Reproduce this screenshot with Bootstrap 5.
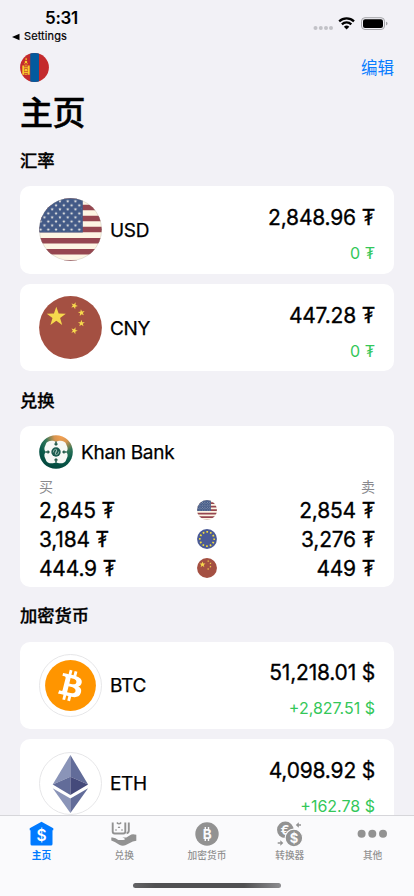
<!DOCTYPE html>
<html lang="zh-CN">
<head>
<meta charset="utf-8">
<meta name="viewport" content="width=device-width, initial-scale=1">
<title>主页</title>
<link href="https://cdn.jsdelivr.net/npm/bootstrap@5.3.0/dist/css/bootstrap.min.css" rel="stylesheet">
<style>
body{background:#f2f1f6;color:#000;font-family:Inter,"Noto Sans CJK SC",sans-serif;line-height:1;overflow:hidden}
.screen{width:414px;height:896px}
.status{height:44px}
.clock{font-size:17px;font-weight:600;margin:10px 0 0 45px;letter-spacing:-.3px}
.backlink{font-size:11px;font-weight:400;margin:4px 0 0 12px;height:11px;letter-spacing:.1px;-webkit-text-stroke:.2px #000}
.signals{padding:15px 26px 0 0}
.topnav{height:46px}
.edit{color:#087cff;font-size:16.5px;padding-top:2px}
.page-title{font-size:33px;font-weight:500;height:43px;letter-spacing:-.5px;padding-top:4px;-webkit-text-stroke:.5px #000}
.sect{font-size:17.3px;font-weight:500;height:54.6px;margin:0;padding-top:5px;-webkit-text-stroke:.3px #000}
.sect-first{height:53px;padding-top:4px}
.tile{border:0;border-radius:10px}
.rate{height:87.7px;margin-bottom:10px;padding:0 19px}
.code{font-size:19px;font-weight:400;margin-left:8px;padding-top:1px;letter-spacing:-.3px;-webkit-text-stroke:.25px #000}
.amount{font-size:21px;font-weight:400;white-space:nowrap;letter-spacing:-.2px;-webkit-text-stroke:.3px #000}
.delta{font-size:16px;color:#34c759;white-space:nowrap}
.figures{height:62px;padding-top:8px}
.bank{height:161px;padding:9px 19px 0}
.cap{font-size:14px;color:#8a8a8e;height:18px;padding-bottom:2px}
.quote{height:29px}
.quote span{padding-top:1px}
.bank .quotes{padding-top:1px}
.tabs{height:81px;background:#fafafc;border-top:1px solid #d6d6da;color:#929292}
.tabs svg{height:26px;width:34px}
.tabs a{color:inherit;font-size:9.7px;font-weight:500;padding-top:5px}
.tabs a.active{color:#007aff;font-weight:700}
.home-bar{width:148px;height:5px;border-radius:3px;background:linear-gradient(90deg,#646466,#505052 15%,#505052 75%,#8d8d90);bottom:8px;left:133px}
svg text{font-family:Inter,sans-serif}
</style>
<script src="https://cdn.jsdelivr.net/npm/bootstrap@5.3.0/dist/js/bootstrap.bundle.min.js"></script>
</head>
<body>
<svg width="0" height="0" class="position-absolute" aria-hidden="true">
<defs>
<clipPath id="round"><circle cx="31.5" cy="31.5" r="31.3"/></clipPath>
<path id="star" d="M0-1 .235-.324.951-.309.38.124.588.809 0 .4-.588.809-.38.124-.951-.309-.235-.324Z"/>
<pattern id="stars" x="-2.3" y="1.3" width="7.75" height="8.06" patternUnits="userSpaceOnUse"><g fill="#f4f1ea">
<use href="#star" transform="translate(0 2) scale(1.7)"/><use href="#star" transform="translate(7.75 2) scale(1.7)"/><use href="#star" transform="translate(3.87 6.03) scale(1.7)"/></g>
</pattern>
<radialGradient id="kh" cx=".66" cy=".04" r=".95"><stop offset="0" stop-color="#f3a052"/><stop offset=".22" stop-color="#d7944f"/><stop offset=".5" stop-color="#2f7558"/><stop offset=".75" stop-color="#0a5a4a"/><stop offset="1" stop-color="#04493f"/></radialGradient>
<symbol id="us" viewBox="0 0 63 63"><g clip-path="url(#round)"><path fill="#fdf5e3" d="M0 0h63v63H0z"/><path stroke="#964650" stroke-width="5.5" d="M0-1.6h63M0 9.5h63M0 20.5h63M0 31.6h63M0 42.7h63M0 53.8h63M0 64.8h63"/><path fill="#435a87" d="M0 0h43.8v34.4H0z"/><path fill="url(#stars)" d="M0 1h43v33H0z"/></g><circle cx="31.5" cy="31.5" r="31.1" fill="none" stroke="#888" stroke-opacity=".35" stroke-width=".6"/></symbol>
<symbol id="cn" viewBox="0 0 63 63"><circle cx="31.5" cy="31.5" r="31.4" fill="#a45042"/><g fill="#f6d94d"><use href="#star" transform="translate(17.3 20.8) scale(10)"/><use href="#star" transform="translate(35.3 9.7) rotate(22) scale(3.6)"/><use href="#star" transform="translate(42.4 16.7) rotate(-8) scale(3.6)"/><use href="#star" transform="translate(42.4 27.4) scale(3.6)"/><use href="#star" transform="translate(35.3 34.7) rotate(20) scale(3.6)"/></g></symbol>
<symbol id="eu" viewBox="0 0 63 63"><circle cx="31.5" cy="31.5" r="31.4" fill="#4a5a96"/><circle cx="31.5" cy="31.5" r="22.5" fill="none" stroke="#f1dc3c" stroke-width="5.6" stroke-dasharray="5.4 6.381" stroke-dashoffset="2.7"/></symbol>
</defs>
</svg>

<div class="screen d-flex flex-column overflow-hidden position-relative">
  <header class="status d-flex justify-content-between flex-shrink-0">
    <div>
      <div class="clock">5:31</div>
      <div class="backlink d-flex align-items-center"><svg width="8" height="8" viewBox="0 0 8 8" class="me-1"><path d="M0 4 7.5.7v6.6z"/></svg>Settings</div>
    </div>
    <svg class="signals" width="102" height="33" viewBox="0 0 76 18">
      <g fill="#c2c2c7"><circle cx="3.500" cy="13" r="2"/><circle cx="8.800" cy="13" r="2"/><circle cx="14" cy="13" r="2"/><circle cx="19" cy="13" r="2"/></g>
      <g fill="none" stroke="#000" stroke-width="2.3"><path d="M27.2 6.3a10.8 10.8 0 0 1 14.8 0M29.9 9.3a6.9 6.9 0 0 1 9.4 0"/></g><path d="m34.6 14.5-2.7-2.7a4 4 0 0 1 5.4 0z"/>
      <rect x="49.500" y="2.700" width="23" height="11.800" rx="3.500" fill="none" stroke="#a4a4a8"/><rect x="51" y="4.200" width="20" height="8.800" rx="2.100"/><path d="M74 6.800q1.500.3 1.500 1.800t-1.500 1.800z" fill="#a4a4a8"/>
    </svg>
  </header>
  <nav class="topnav d-flex justify-content-between align-items-center flex-shrink-0 px-3 mx-1">
    <svg width="29" height="29" viewBox="0 0 63 63"><g clip-path="url(#round)"><path fill="#c42a2d" d="M0 0h63v63H0z"/><path fill="#035a9e" d="M22.3 0h19v63h-19z"/></g>
      <g fill="#f5cb2a"><path d="M5 27h4.500v20H5zM16.500 27H21v20h-4.500zM9.800 27h6.400l-3.200 3zM9.800 31h6.400v2.400h-6.400zM9.800 41.500h6.400v2h-6.400zM9.800 47h6.400l-3.200-3z"/><circle cx="13" cy="37.300" r="3"/><circle cx="13" cy="19.500" r="2.800"/><path d="M8.500 21q4.500 6 9 0l-1 3.500h-7zM13 10q4 5 0 6-3-1 0-6"/></g></svg>
    <a class="edit text-decoration-none" href="#">编辑</a>
  </nav>
  <h1 class="page-title d-flex align-items-center flex-shrink-0 m-0 ps-3 ms-1">主页</h1>

  <main class="px-3 mx-1 flex-grow-1 overflow-hidden">
    <h2 class="sect sect-first d-flex align-items-center">汇率</h2>
    <section class="card tile rate flex-row align-items-center">
      <svg width="63" height="63"><use href="#us"/></svg><span class="code">USD</span>
      <div class="figures ms-auto d-flex flex-column justify-content-between align-items-end"><span class="amount">2,848.96 ₮</span><span class="delta">0 ₮</span></div>
    </section>
    <section class="card tile rate flex-row align-items-center mb-0">
      <svg width="63" height="63"><use href="#cn"/></svg><span class="code">CNY</span>
      <div class="figures ms-auto d-flex flex-column justify-content-between align-items-end"><span class="amount">447.28 ₮</span><span class="delta">0 ₮</span></div>
    </section>

    <h2 class="sect d-flex align-items-center">兑换</h2>
    <section class="card tile bank">
      <div class="d-flex align-items-center">
        <svg width="34" height="34" viewBox="0 0 34 34"><circle cx="17" cy="17" r="16.800" fill="url(#kh)"/><path fill="#f7f8f6" d="M17 6.800C20 4.800 26.500 5.200 27.300 9.500c.4 1.500 1.400 2.300 1.300 4.500-.1 1.300-.6 2-1.300 3 .7 1 1.200 1.700 1.300 3 .1 2.200-.9 3-1.300 4.500C26.500 28.800 20 29.200 17 27.200 14 29.200 7.500 28.800 6.700 24.500 6.300 23 5.300 22.200 5.400 20c.1-1.300.6-2 1.300-3-.7-1-1.200-1.700-1.300-3-.1-2.200.9-3 1.300-4.500C7.500 5.200 14 4.800 17 6.800Z"/><circle cx="17" cy="17" r="4.700" fill="#19594d"/><path d="M14.200 17.500q0-3 2.500-3.200 1.800.2.700 1.700-1.500.8-1 2.600M19.800 16.500q0 3-2.500 3.200-1.800-.2-.7-1.700 1.500-.8 1-2.600" fill="none" stroke="#cfe0d9" stroke-width=".6"/><g fill="#24594a"><path id="fin" d="M15.200 8.500h1V6.500h1.600v2h1q0 1.800-1.800 2.300-1.800-.5-1.800-2.300"/><use href="#fin" transform="rotate(90 17 17)"/><use href="#fin" transform="rotate(180 17 17)"/><use href="#fin" transform="rotate(270 17 17)"/></g></svg>
        <span class="code">Khan Bank</span>
      </div>
      <div class="cap d-flex justify-content-between align-items-center mt-2 pt-1"><span>买</span><span>卖</span></div>
      <div class="quotes">
        <div class="quote row g-0 align-items-center amount"><span class="col">2,845 ₮</span><svg class="col-auto" width="20" height="20"><use href="#us"/></svg><span class="col text-end">2,854 ₮</span></div>
        <div class="quote row g-0 align-items-center amount"><span class="col">3,184 ₮</span><svg class="col-auto" width="20" height="20"><use href="#eu"/></svg><span class="col text-end">3,276 ₮</span></div>
        <div class="quote row g-0 align-items-center amount"><span class="col">444.9 ₮</span><svg class="col-auto" width="20" height="20"><use href="#cn"/></svg><span class="col text-end">449 ₮</span></div>
      </div>
    </section>

    <h2 class="sect d-flex align-items-center">加密货币</h2>
    <section class="card tile rate flex-row align-items-center">
      <svg width="63" height="63" viewBox="0 0 63 63"><circle cx="31.500" cy="31.500" r="31" fill="#fff" stroke="#e3e3e5" stroke-width=".9"/><circle cx="31.500" cy="31.500" r="25.400" fill="#ff9500"/><path fill="#fff" transform="translate(6.100 6.300) scale(1.580)" d="M23.189 14.020c.314-2.096-1.283-3.223-3.465-3.975l.708-2.840-1.728-.430-.690 2.765c-.454-.114-.920-.220-1.385-.326l.695-2.783L15.596 6l-.708 2.839c-.376-.086-.746-.170-1.104-.260l.002-.009-2.384-.595-.460 1.846s1.283.294 1.256.312c.700.175.826.638.805 1.006l-.806 3.235c.048.012.110.030.180.057l-.183-.045-1.130 4.532c-.086.212-.303.531-.793.410.018.025-1.256-.313-1.256-.313l-.858 1.978 2.250.561c.418.105.828.215 1.231.318l-.715 2.872 1.727.430.708-2.840c.472.127.930.245 1.378.357l-.706 2.828 1.728.430.715-2.866c2.948.558 5.164.333 6.097-2.333.752-2.146-.037-3.385-1.588-4.192 1.130-.260 1.980-1.003 2.207-2.538zm-3.950 5.538c-.533 2.147-4.148.986-5.320.695l.950-3.805c1.172.293 4.929.872 4.370 3.110zm.535-5.569c-.487 1.953-3.495.960-4.470.717l.860-3.450c.975.243 4.118.696 3.610 2.733z"/></svg><span class="code">BTC</span>
      <div class="figures ms-auto d-flex flex-column justify-content-between align-items-end"><span class="amount">51,218.01 $</span><span class="delta">+2,827.51 $</span></div>
    </section>
    <section class="card tile rate flex-row align-items-center">
      <svg width="63" height="63" viewBox="0 0 63 63"><circle cx="31.500" cy="31.500" r="31" fill="#fff" stroke="#e3e3e5" stroke-width=".9"/><path fill="#8a94b8" d="M31.400 3v21.700L13.700 32.500z"/><path fill="#626c99" d="M31.400 3v21.700L49.100 32.500z"/><path fill="#626c99" d="M31.400 24.700V43L13.700 32.500z"/><path fill="#454a7b" d="M31.400 24.700V43l17.700-10.500z"/><path fill="#8a94b8" d="M13.700 36.200 31.400 46.500V61z"/><path fill="#626c99" d="M49.100 36.200 31.400 46.500V61z"/></svg><span class="code">ETH</span>
      <div class="figures ms-auto d-flex flex-column justify-content-between align-items-end"><span class="amount">4,098.92 $</span><span class="delta">+162.78 $</span></div>
    </section>
  </main>

  <footer class="tabs row row-cols-5 g-0 flex-shrink-0 align-items-start text-center">
    <a href="#" class="col active d-flex flex-column align-items-center text-decoration-none gap-1"><svg viewBox="0 0 34 26"><path fill="currentColor" d="M17.500 .8 29.300 7.200v2h-.8V23q0 1.500-1.500 1.500H8Q6.500 24.500 6.500 23V9.200h-.8v-2z"/><text x="17.500" y="19.600" font-size="15.500" font-weight="600" fill="#fff" text-anchor="middle">$</text></svg>主页</a>
    <a href="#" class="col d-flex flex-column align-items-center text-decoration-none gap-1"><svg viewBox="0 0 34 26" fill="none" stroke="currentColor"><path stroke-width="1.900" d="M5.700 1.500v9q0 2 2 2h8.600q2 0 2-2v-9M21.800 1.500v8q0 2.500-2.200 2.800"/><path fill="currentColor" stroke="none" d="M9.700 1.300h1.300q1 1.700 2 0h1.300v1.500q-2.300 1.500-4.600 0zM8 9l1-1 1 1-1 1zM14 9l1-1 1 1-1 1zM10.900 6q1.100-1.200 2.200 0v1h-2.200zM4.300 16.500q4-.5 7 2.500h5q2.500-.3 1-1.800l-2-.7h4l5-3q2-.8 5 .3v6q-4 .5-6 2l-5 2.500q-3 1-6-.5-5-3.500-8-4.300z"/></svg>兑换</a>
    <a href="#" class="col d-flex flex-column align-items-center text-decoration-none gap-1"><svg viewBox="0 0 34 26"><circle cx="17" cy="13" r="11.700" fill="currentColor"/><text x="17.300" y="18" font-size="13.500" font-weight="700" fill="#fafafc" text-anchor="middle">B</text><path stroke="#fafafc" stroke-width="1.400" d="M15.300 6v3M18.500 6v3M15.300 17v3M18.500 17v3"/></svg>加密货币</a>
    <a href="#" class="col d-flex flex-column align-items-center text-decoration-none gap-1"><svg viewBox="0 0 34 26"><circle cx="12.300" cy="8.800" r="8.300" fill="currentColor"/><text x="12" y="13.500" font-size="13" font-weight="700" fill="#fafafc" text-anchor="middle">€</text><circle cx="20.900" cy="17" r="8.800" fill="currentColor" stroke="#fafafc" stroke-width="1.200"/><text x="20.900" y="21.800" font-size="13" font-weight="700" fill="#fafafc" text-anchor="middle">$</text><path d="M28 4h-3M4.700 22h3" stroke="currentColor" stroke-width="1.600"/><path fill="currentColor" d="m22.800 4 3-2.700v5.400zM10.300 22l-3-2.700v5.400z"/></svg>转换器</a>
    <a href="#" class="col d-flex flex-column align-items-center text-decoration-none gap-1"><svg viewBox="0 0 34 26" fill="currentColor"><circle cx="5.600" cy="12.700" r="4"/><circle cx="16.300" cy="12.700" r="4"/><circle cx="27" cy="12.700" r="4"/></svg>其他</a>
  </footer>
  <div class="home-bar position-absolute"></div>
</div>
</body>
</html>
